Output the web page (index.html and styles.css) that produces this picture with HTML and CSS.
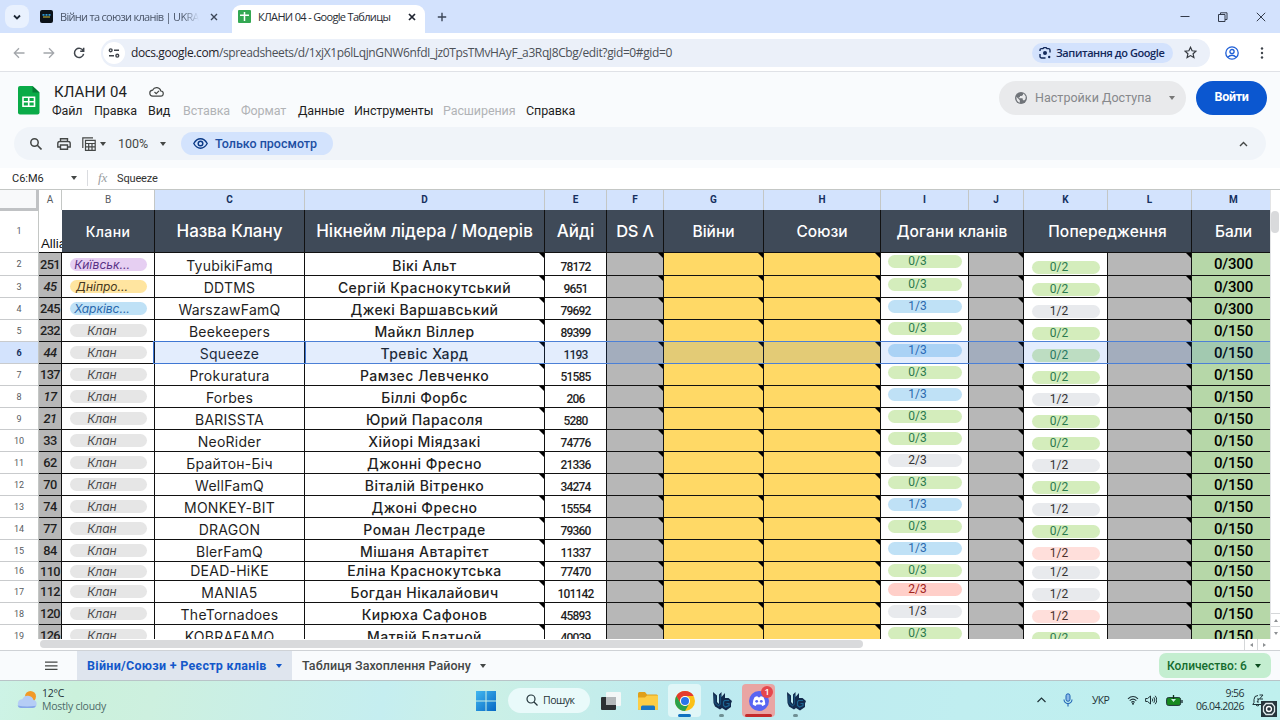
FILE: index.html
```
<!DOCTYPE html>
<html lang="uk">
<head>
    <meta charset="UTF-8">
    <meta name="viewport" content="width=device-width, initial-scale=1.0">
    <title>КЛАНИ 04 - Google Таблицы</title>
    <link rel="stylesheet" href="styles.css">
</head>
<body>
    <div class="tabstrip">
        <div class="tab-search">
            <svg width="10" height="10" viewBox="0 0 10 10"><path d="M2 3.5l3 3 3-3" fill="none" stroke="#1f2937" stroke-width="1.8"/></svg>
        </div>
        <div class="tab">
            <svg width="13" height="13" viewBox="0 0 13 13"><rect width="13" height="13" rx="2" fill="#0b1118"/><path d="M2.5 4.8h2M5.5 4.8h2M8.5 4.8h2" stroke="#2f9bd6" stroke-width="1.8"/><path d="M3 7h7" stroke="#b3a53a" stroke-width="1.2"/></svg>
            <span class="tab-title faded">Війни та союзи кланів | UKRAI</span>
            <svg width="8" height="8" viewBox="0 0 8 8"><path d="M1 1l6 6M7 1L1 7" stroke="#3c4657" stroke-width="1.4"/></svg>
        </div>
        <div class="tab active">
            <svg width="13" height="13" viewBox="0 0 13 13"><rect width="13" height="13" rx="1" fill="#34a853"/><path d="M6.5 2v9M2 5.2h9" stroke="#fff" stroke-width="1.5"/></svg>
            <span class="tab-title">КЛАНИ 04 - Google Таблицы</span>
            <svg width="8" height="8" viewBox="0 0 8 8"><path d="M1 1l6 6M7 1L1 7" stroke="#1f2430" stroke-width="1.7"/></svg>
        </div>
        <svg class="new-tab" width="10" height="10" viewBox="0 0 10 10"><path d="M5 .8v8.4M.8 5h8.4" stroke="#3c4657" stroke-width="1.4"/></svg>
        <div class="window-buttons">
            <svg width="10" height="10" viewBox="0 0 10 10"><path d="M.5 4.5h9" stroke="#333b4a"/></svg>
            <svg width="10" height="10" viewBox="0 0 10 10"><path d="M.5 2.500h6.500v7H.5zM2.500 2.500V.8H9V7.500H7" fill="none" stroke="#333b4a"/></svg>
            <svg width="10" height="10" viewBox="0 0 10 10"><path d="M.8.8l8.400 8.400M9.200.8L.8 9.200" stroke="#333b4a"/></svg>
        </div>
    </div>

    <div class="navbar">
        <svg class="nav-ico" width="12" height="12" viewBox="0 0 12 12"><path d="M11.500 6H1.500M6 1.300L1.300 6 6 10.700" fill="none" stroke="#a3a6ab" stroke-width="1.3"/></svg>
        <svg class="nav-ico" width="12" height="12" viewBox="0 0 12 12"><path d="M.5 6h10M6 1.300L10.700 6 6 10.700" fill="none" stroke="#a3a6ab" stroke-width="1.3"/></svg>
        <svg class="nav-ico" width="12" height="12" viewBox="0 0 12 12"><path d="M10.300 4A4.600 4.600 0 1 0 10.600 6.800M10.700 .8V4.300H7.200" fill="none" stroke="#3f444b" stroke-width="1.5"/></svg>
        <div class="omnibox">
            <div class="site-info">
                <svg width="12" height="10" viewBox="0 0 12 10"><g fill="none" stroke="#3f444b" stroke-width="1.400"><circle cx="2.700" cy="2.300" r="1.400"/><path d="M6 2.300h5M1 7.700h5"/><circle cx="9.300" cy="7.700" r="1.400"/></g></svg>
            </div>
            <span class="url"><b>docs.google.com</b>/spreadsheets/d/1xjX1p6lLqjnGNW6nfdI_jz0TpsTMvHAyF_a3RqJ8Cbg/edit?gid=0#gid=0</span>
            <div class="ask-google">
                <svg width="12" height="12" viewBox="0 0 12 12"><path d="M1 4V3q0-1.400 1.400-1.400H4L5 .6h2l1 1h1.600Q11 1.600 11 3v2.500M1 7v2.600Q1 11 2.400 11H6.500" fill="none" stroke="#12285a" stroke-width="1.400"/><circle cx="6" cy="6" r="2" fill="#12285a"/><circle cx="10.200" cy="10" r="1.200" fill="#12285a"/></svg>
                <span>Запитання до Google</span>
            </div>
            <svg class="star" width="13" height="13" viewBox="0 0 13 13"><path d="M6.500 1.300l1.600 3.500 3.800.4-2.800 2.600.8 3.700-3.400-1.900-3.400 1.900.8-3.700L1.100 5.200l3.800-.4z" fill="none" stroke="#33383f" stroke-width="1.200"/></svg>
        </div>
        <svg class="profile" width="14" height="14" viewBox="0 0 14 14"><g fill="none" stroke="#1f5fd6" stroke-width="1.300"><circle cx="7" cy="7" r="6.200"/><circle cx="7" cy="5.600" r="2.100"/><path d="M2.800 11.200Q7 7.200 11.200 11.200"/></g></svg>
        <svg class="kebab" width="4" height="12" viewBox="0 0 4 12"><g fill="#3f444b"><circle cx="2" cy="1.500" r="1.200"/><circle cx="2" cy="6" r="1.200"/><circle cx="2" cy="10.500" r="1.200"/></g></svg>
    </div>

    <div class="doc-header">
        <svg class="sheets-logo" width="22" height="29" viewBox="0 0 22 29"><path d="M2 0h12.500L21.500 6.500V26.500a2 2 0 0 1-2 2H2a2 2 0 0 1-2-2V2a2 2 0 0 1 2-2z" fill="#0aab48"/><path d="M14.500 0L21.500 6.500H14.500z" fill="#067a35"/><path d="M5 11.300h11.500v9H5zM5 15.800h11.500M10.700 11.300v9" fill="none" stroke="#fff" stroke-width="1.600"/></svg>
        <div class="doc-info">
            <div class="doc-title">
                <span>КЛАНИ 04</span>
                <svg width="15" height="11" viewBox="0 0 15 11"><path d="M4 10.200h7.500a2.600 2.600 0 0 0 .3-5.200A4.300 4.300 0 0 0 3.700 4.100 3 3 0 0 0 4 10.200zM5.500 6l1.700 1.700L10 4.800" fill="none" stroke="#444746" stroke-width="1.200"/></svg>
            </div>
            <div class="menu">
                <span class="m1">Файл</span><span class="m2">Правка</span><span class="m3">Вид</span><span class="m4 off">Вставка</span><span class="m5 off">Формат</span><span class="m6">Данные</span><span class="m7">Инструменты</span><span class="m8 off">Расширения</span><span class="m9">Справка</span>
            </div>
        </div>
        <div class="share">
            <svg width="12" height="12" viewBox="0 0 12 12"><circle cx="6" cy="6" r="6" fill="#707479"/><path d="M1.300 4.800L4.800 8.200V10.800Q1.300 9.800 1.300 4.800zM5 1.500H8V3L6.500 4H5V5.300H3.800V6.300H7.500L8 8.200H9.500Q11 7 10.700 4.500 9.500 2 8 1.500" fill="#e9eaec"/></svg>
            <span>Настройки Доступа</span>
            <i class="arrow"></i>
        </div>
        <div class="login">Войти</div>
    </div>

    <div class="toolbar-wrap">
        <div class="toolbar">
            <svg class="t-search" width="12" height="12" viewBox="0 0 12 12"><circle cx="4.500" cy="4.500" r="3.700" fill="none" stroke="#444746" stroke-width="1.500"/><path d="M7.300 7.300l4.200 4.200" stroke="#444746" stroke-width="1.600"/></svg>
            <svg class="t-print" width="14" height="12" viewBox="0 0 14 12"><path d="M3.500 3.500V.8h7v2.700M3.500 9H.8V5.500q0-2 2-2h8.400q2 0 2 2V9H10.500M3.500 7h7v4.300h-7z" fill="none" stroke="#444746" stroke-width="1.400"/></svg>
            <svg class="t-filter" width="14" height="14" viewBox="0 0 14 14"><path d="M.8 11V.8H11M3.500 3.300h9.700v10H3.500zM3.500 6.500h9.700M3.500 9.800h9.700M6.700 6.500v6.800M10 6.500v6.800" fill="none" stroke="#444746" stroke-width="1.200"/></svg>
            <i class="arrow"></i>
            <span class="zoom">100%</span>
            <i class="arrow"></i>
            <div class="view-only">
                <svg width="15" height="11" viewBox="0 0 15 11"><path d="M.8 5.500Q3.500.8 7.500.8t6.700 4.700Q11.500 10.200 7.500 10.200T.8 5.500z" fill="none" stroke="#0b3a86" stroke-width="1.400"/><circle cx="7.500" cy="5.500" r="2.300" fill="none" stroke="#0b3a86" stroke-width="1.500"/></svg>
                <span>Только просмотр</span>
            </div>
            <svg class="t-collapse" width="9" height="6" viewBox="0 0 9 6"><path d="M1 5l3.500-3.500L8 5" fill="none" stroke="#444746" stroke-width="1.400"/></svg>
        </div>
    </div>

    <div class="formula">
        <span class="range">C6:M6</span>
        <i class="arrow"></i>
        <span class="fx">fx</span>
        <span class="value">Squeeze</span>
    </div>

    <div class="sheet">
        <div class="grid" id="grid"></div>
        <div class="vscroll">
            <div class="vthumb"></div>
            <div class="step"><i class="up"></i></div>
            <div class="step"><i class="down"></i></div>
        </div>
    </div>
    <div class="hscroll">
        <div class="hthumb"></div>
        <div class="hstep"><i class="left"></i></div>
        <div class="hstep"><i class="right"></i></div>
    </div>

    <div class="sheet-tabs">
        <svg class="all-sheets" width="13" height="10" viewBox="0 0 13 10"><path d="M0 1.200h12.500M0 4.800h12.500M0 8.400h12.500" stroke="#444746" stroke-width="1.300"/></svg>
        <div class="sheet-tab current"><span>Війни/Союзи + Реєстр кланів</span><i class="arrow"></i></div>
        <div class="sheet-tab"><span>Таблиця Захоплення Району</span><i class="arrow"></i></div>
        <div class="count"><span>Количество: 6</span><i class="arrow"></i></div>
    </div>

    <div class="taskbar">
        <svg class="weather-ico" width="22" height="19" viewBox="0 0 22 19"><circle cx="14.500" cy="6.500" r="5.500" fill="#f29a26"/><path d="M5 18h11.500a4 4 0 0 0 1-7.900A6 6 0 0 0 6.300 9.200 4.500 4.500 0 0 0 5 18z" fill="#b5cdf6"/><path d="M5 18h11.500a4 4 0 0 0 3.500-2.200Q10 17.500 1.500 15.500 2.500 18 5 18z" fill="#86a8ea"/></svg>
        <div class="weather"><span>12°C</span><span class="dim">Mostly cloudy</span></div>
        <div class="apps">
            <svg class="win" width="20" height="20" viewBox="0 0 20 20"><defs><linearGradient id="w" x1="0" y1="0" x2="1" y2="1"><stop offset="0" stop-color="#42b7f0"/><stop offset="1" stop-color="#0668c4"/></linearGradient></defs><path d="M0 0h9.500v9.500H0zM10.500 0H20v9.500h-9.500zM0 10.500h9.500V20H0zM10.500 10.500H20V20h-9.500z" fill="url(#w)"/></svg>
            <div class="search">
                <svg width="12" height="12" viewBox="0 0 12 12"><circle cx="5" cy="5" r="4" fill="none" stroke="#23343a" stroke-width="1.200"/><path d="M8 8l3.500 3.500" stroke="#23343a" stroke-width="1.300"/></svg>
                <span>Пошук</span>
            </div>
            <div class="app"><svg width="20" height="20" viewBox="0 0 20 20"><rect x="5" y="1" width="15" height="14" rx="1" fill="#f3f7f7"/><rect x="0" y="6" width="15" height="13" rx="1" fill="#2d3033"/><rect x="5" y="6" width="10" height="8" fill="#b4b8ba"/></svg></div>
            <div class="app"><svg width="20" height="20" viewBox="0 0 20 20"><path d="M0 2.500Q0 1 1.500 1H7l2 2.500h9.500Q20 3.500 20 5v12.500Q20 19 18.500 19h-17Q0 19 0 17.500z" fill="#e0a01a"/><path d="M0 6.500h7L9 4.500h11v13q0 1.500-1.500 1.500h-17Q0 19 0 17.500z" fill="#fccd45"/><path d="M3 19v-3q0-1.500 1.500-1.500h11q1.500 0 1.500 1.500v3z" fill="#1a76c4"/></svg></div>
            <div class="app open">
                <svg width="20" height="20" viewBox="0 0 20 20"><circle cx="10" cy="10" r="10" fill="#fbc116"/><path d="M1.340 5A10 10 0 0 1 18.660 5H10a5 5 0 0 0-4.330 7.500z" fill="#e33b2e"/><path d="M1.340 5A10 10 0 0 0 10 20l4.330-7.500a5 5 0 0 1-8.660 0z" fill="#2aa14b"/><circle cx="10" cy="10" r="5" fill="#fff"/><circle cx="10" cy="10" r="4" fill="#2a74e8"/></svg>
                <i class="mark"></i>
            </div>
            <div class="app">
                <svg width="20" height="20" viewBox="0 0 20 20"><use href="#ug"/></svg>
                <i class="mark small"></i>
            </div>
            <div class="app alert">
                <svg width="20" height="20" viewBox="0 0 20 20"><circle cx="10" cy="10" r="10" fill="#5865f2"/><path d="M5.500 6.200Q7.500 5 8.500 5.300L9 6.200h2l.5-.9q1 -.3 3 .9 2 3.500 1.700 7.300-1.600 1.300-3 1.400l-.8-1.400H7.600l-.8 1.400q-1.400-.1-3-1.400Q3.500 9.700 5.500 6.200z" fill="#fff"/><circle cx="7.700" cy="10.300" r="1.400" fill="#5865f2"/><circle cx="12.300" cy="10.300" r="1.400" fill="#5865f2"/></svg>
                <i class="mark red"></i>
                <b class="badge">1</b>
            </div>
            <div class="app">
                <svg width="20" height="20" viewBox="0 0 20 20"><g id="ug"><path d="M1 1l4 3.500V11l2 2V3.500L9.500 1v5L13 2v5h3.500l3.500 3-1 2.500v3.500L14 19.500 10 17l-2 1.500L3 15.500 1.500 12z" fill="#122a4c"/><path d="M3 4.500V12l3.500 3L8.500 13V4" fill="none" stroke="#184f78" stroke-width="1.200"/><path d="M17 9.500h-4.500l-1 1.500v3.500l2 1.500 3.500-1.500V12.500h-2.500" fill="none" stroke="#1c6592" stroke-width="1.200"/></g></svg>
                <i class="mark small"></i>
            </div>
        </div>
        <div class="tray">
            <svg class="y1" width="9" height="6" viewBox="0 0 9 6"><path d="M.5 5l4-4 4 4" fill="none" stroke="#1f3338" stroke-width="1.200"/></svg>
            <svg class="y2" width="10" height="14" viewBox="0 0 10 14"><rect x="3" y=".8" width="4" height="7.500" rx="2" fill="#8bb9e8" stroke="#1d62b4"/><path d="M1 6.500a4 4 0 0 0 8 0M5 10.500v3" fill="none" stroke="#1d62b4" stroke-width="1.100"/></svg>
            <span class="lang">УКР</span>
            <svg class="y3" width="12" height="10" viewBox="0 0 12 10"><g fill="none" stroke="#1f3338" stroke-width="1.100"><path d="M1 3.800q5-4.600 10 0M2.700 5.700q3.300-3 6.600 0M4.300 7.400q1.700-1.500 3.400 0"/></g><circle cx="6" cy="8.700" r="1" fill="#1f3338"/></svg>
            <svg class="y4" width="12" height="10" viewBox="0 0 12 10"><path d="M.6 3.500h2L5.500 1v8L2.600 6.500h-2zM7.200 3.500q1.200 1.500 0 3M8.800 2.200q2.200 2.800 0 5.600M10.200.8q3.200 4.200 0 8.400" fill="none" stroke="#1f3338"/></svg>
            <svg class="y5" width="17" height="11" viewBox="0 0 17 11"><rect x=".6" y="2.600" width="14" height="7.800" rx="1.800" fill="#168a1e" stroke="#1f3338"/><path d="M16 5v3" stroke="#1f3338" stroke-width="1.400"/><path d="M7.500 0v5" stroke="#10331a" stroke-width="1.300"/><path d="M5 4h5L7.500 7z" fill="#c9efe0"/></svg>
            <div class="clock"><span>9:56</span><span>06.04.2026</span></div>
            <div class="bell">
                <svg width="12" height="13" viewBox="0 0 12 13"><path d="M6 1.500Q2 1.500 2 5.500V8.500L.8 10.500h10L9.800 8.500M4 11q1 1.500 3 .5M7.500 1h3.500L7.500 5H11M5 5h2L5 8h2" fill="none" stroke="#1f3338"/></svg>
                <div class="recorder"><svg width="16" height="16" viewBox="0 0 16 16"><rect width="16" height="16" fill="#25353b"/><path d="M5 2.500h6l2.500 3v5l-2.500 3H5l-2.500-3v-5z" fill="none" stroke="#dfe9ea" stroke-width="1.300"/><circle cx="8" cy="8" r="2.500" fill="none" stroke="#fff" stroke-width="1.400"/></svg></div>
            </div>
        </div>
    </div>

    <script>
        const letters = ["A", "B", "C", "D", "E", "F", "G", "H", "I", "J", "K", "L", "M"];
        const noted = ["D", "F", "G", "H", "J", "L"];

        // id, italic id, chip, clan, leader, player id, reprimand, colour, warning, colour, points
        const rows = [
            ["251", 0, "Київськ...", "TyubikiFamq", "Вікі Альт", "78172", "0/3", "green", "0/2", "green", "0/300", "purple"],
            ["45", 1, "Дніпро...", "DDTMS", "Сергій Краснокутський", "9651", "0/3", "green", "0/2", "green", "0/300", "yellow"],
            ["245", 0, "Харківс...", "WarszawFamQ", "Джекі Варшавський", "79692", "1/3", "blue", "1/2", "grey", "0/300", "blue"],
            ["232", 0, "Клан", "Beekeepers", "Майкл Віллер", "89399", "0/3", "green", "0/2", "green", "0/150"],
            ["44", 1, "Клан", "Squeeze", "Тревіс Хард", "1193", "1/3", "blue", "0/2", "green", "0/150"],
            ["137", 0, "Клан", "Prokuratura", "Рамзес Левченко", "51585", "0/3", "green", "0/2", "green", "0/150"],
            ["17", 1, "Клан", "Forbes", "Біллі Форбс", "206", "1/3", "blue", "1/2", "grey", "0/150"],
            ["21", 1, "Клан", "BARISSTA", "Юрий Парасоля", "5280", "0/3", "green", "0/2", "green", "0/150"],
            ["33", 0, "Клан", "NeoRider", "Хійорі Міядзакі", "74776", "0/3", "green", "0/2", "green", "0/150"],
            ["62", 0, "Клан", "Брайтон-Біч", "Джонні Фресно", "21336", "2/3", "grey", "1/2", "grey", "0/150"],
            ["70", 0, "Клан", "WellFamQ", "Віталій Вітренко", "34274", "0/3", "green", "0/2", "green", "0/150"],
            ["74", 0, "Клан", "MONKEY-BIT", "Джоні Фресно", "15554", "1/3", "blue", "1/2", "grey", "0/150"],
            ["77", 0, "Клан", "DRAGON", "Роман Лестраде", "79360", "0/3", "green", "0/2", "green", "0/150"],
            ["84", 0, "Клан", "BlerFamQ", "Мішаня Автарітєт", "11337", "1/3", "blue", "1/2", "pink", "0/150"],
            ["110", 0, "Клан", "DEAD-HiKE", "Еліна Краснокутська", "77470", "0/3", "green", "1/2", "grey", "0/150"],
            ["112", 0, "Клан", "MANIA5", "Богдан Нікалайович", "101142", "2/3", "red", "1/2", "grey", "0/150"],
            ["120", 0, "Клан", "TheTornadoes", "Кирюха Сафонов", "45893", "1/3", "grey", "1/2", "pink", "0/150"],
            ["126", 0, "Клан", "KOBRAFAMQ", "Матвій Блатной", "40039", "0/3", "green", "0/2", "green", "0/150"]
        ];

        const chip = (text, color) => `<span class="chip ${color}"><span>${text}</span></span>`;

        let html = `<div class="row letters"><div class="num corner"></div>` +
            letters.map(l => `<div class="letter ${l > "B" ? "picked" : ""}">${l}</div>`).join("") + `</div>`;

        html += `<div class="row head"><div class="num">1</div><div class="cell alli">Allia</div>
            <div class="cell h14">Клани</div><div class="cell h17">Назва Клану</div>
            <div class="cell h17">Нікнейм лідера / Модерів</div><div class="cell h17">Айді</div>
            <div class="cell h17 ds">DS Λ</div><div class="cell">Війни</div><div class="cell">Союзи</div>
            <div class="cell wide">Догани кланів</div><div class="cell wide">Попередження</div><div class="cell">Бали</div></div>`;

        rows.forEach((r, i) => {
            const n = i + 2;
            const content = {
                A: r[0], B: chip(r[2], r[11] || "plain"), C: r[3], D: r[4], E: r[5],
                I: chip(r[6], r[7]), K: chip(r[8], r[9]), M: r[10]
            };
            html += `<div class="row r${n} ${n === 6 ? "selected" : ""}"><div class="num">${n}</div>` +
                letters.map(l => `<div class="cell c${l} ${noted.includes(l) ? "note" : ""} ${l === "A" && r[1] ? "it" : ""}">${content[l] || ""}</div>`).join("") +
                `</div>`;
        });

        document.getElementById("grid").innerHTML = html;
    </script>
</body>
</html>
```
FILE: styles.css
```
* {
    box-sizing: border-box;
}
body {
    margin: 0;
    width: 1280px;
    height: 720px;
    overflow: hidden;
    display: flex;
    flex-direction: column;
    background-color: #fff;
    font-family: Roboto, "Liberation Sans", sans-serif;
    color: #1f1f1f;
}
svg {
    display: block;
    flex: none;
}
span {
    white-space: nowrap;
}
.arrow {
    flex: none;
    border-left: 3.5px solid transparent;
    border-right: 3.5px solid transparent;
    border-top: 4px solid #444746;
}

/* browser */
.tabstrip {
    height: 33px;
    flex: none;
    display: flex;
    align-items: center;
    background-color: #d3e2fd;
    font-family: "Open Sans", sans-serif;
    font-size: 11px;
}
.tab-search {
    width: 24px;
    height: 23px;
    margin-left: 5px;
    border-radius: 8px;
    background-color: #e9f1fe;
    display: flex;
    align-items: center;
    justify-content: center;
}
.tab {
    width: 190px;
    margin-left: 11px;
    display: flex;
    align-items: center;
    color: #4a5568;
}
.tab-title {
    flex: none;
    width: 139px;
    margin: 0 11px 0 7px;
    letter-spacing: -0.7px;
}
.faded {
    -webkit-mask-image: linear-gradient(to right, #000 88%, transparent);
    mask-image: linear-gradient(to right, #000 88%, transparent);
}
.tab.active {
    width: 193px;
    height: 28px;
    margin: 5px 0 0 2px;
    padding: 0 0 5px 6px;
    border-radius: 9px 9px 0 0;
    background-color: #fff;
    color: #272b33;
}
.tab.active .tab-title {
    letter-spacing: -0.67px;
    margin-right: 12px;
    width: 138px;
}
.new-tab {
    margin-left: 12px;
}
.window-buttons {
    margin-left: auto;
    margin-right: 14px;
    display: flex;
    gap: 28px;
}
.navbar {
    height: 39px;
    flex: none;
    display: flex;
    align-items: center;
    border-bottom: 1px solid #e0e2e7;
    padding: 1px 0 0 13px;
    font-family: "Open Sans", sans-serif;
}
.nav-ico {
    margin-right: 18px;
}
.omnibox {
    width: 1109px;
    height: 28px;
    margin-left: -2px;
    border-radius: 14px;
    background-color: #ebf0f9;
    display: flex;
    align-items: center;
    padding-left: 2px;
}
.site-info {
    width: 22px;
    height: 22px;
    border-radius: 50%;
    background-color: #fff;
    display: flex;
    align-items: center;
    justify-content: center;
}
.url {
    margin-left: 6px;
    font-size: 12px;
    letter-spacing: -0.38px;
    color: #4c5057;
}
.url b {
    font-weight: 400;
    color: #1f2329;
}
.ask-google {
    width: 141px;
    height: 20px;
    margin-left: auto;
    border-radius: 10px;
    background-color: #d3e2fd;
    display: flex;
    align-items: center;
    gap: 5px;
    padding-left: 7px;
    font-size: 11px;
    font-weight: 600;
    letter-spacing: -0.42px;
    color: #12285a;
}
.star {
    margin: 0 13px 0 11px;
}
.profile {
    margin-left: 15px;
}
.kebab {
    margin-left: 21px;
}

/* document header */
.doc-header {
    height: 54px;
    flex: none;
    display: flex;
    background-color: #f9fbfd;
    padding: 0 14px 0 18px;
}
.sheets-logo {
    margin-top: 14px;
}
.doc-info {
    margin: 10px 0 0 12px;
}
.doc-title {
    display: flex;
    align-items: center;
    gap: 22px;
    height: 19px;
    margin-left: 2px;
    font-size: 15px;
    letter-spacing: 0.1px;
}
.menu {
    display: flex;
    height: 19px;
    align-items: center;
    font-size: 12.5px;
    letter-spacing: -0.1px;
}
.menu span {
    flex: none;
}
.m1 { width: 42px; }
.m2 { width: 54px; }
.m3 { width: 35px; }
.m4 { width: 58px; }
.m5 { width: 57px; }
.m6 { width: 56px; }
.m7 { width: 89px; }
.m8 { width: 83px; }
.menu .off {
    color: #b1b3b6;
}
.share {
    width: 187px;
    height: 34px;
    margin: 9px 10px 0 auto;
    border-radius: 17px;
    background-color: #e9eaec;
    display: flex;
    align-items: center;
    padding: 0 11px 1px 16px;
    gap: 8px;
    font-size: 12.5px;
    letter-spacing: 0.03px;
    color: #86888b;
}
.share .arrow {
    margin-left: auto;
    border-top-color: #777;
}
.login {
    width: 71px;
    height: 34px;
    margin-top: 9px;
    margin-right: -1px;
    border-radius: 17px;
    background-color: #0b57d0;
    color: #fff;
    font-size: 12.5px;
    font-weight: 700;
    letter-spacing: -0.3px;
    text-align: center;
    line-height: 32px;
}
.toolbar-wrap {
    height: 42px;
    flex: none;
    background-color: #f9fbfd;
    padding: 1px 14px 0;
}
.toolbar {
    height: 33px;
    border-radius: 17px;
    background-color: #f0f4f9;
    display: flex;
    align-items: center;
    padding: 0 18px 0 16px;
}
.t-print {
    margin-left: 15px;
}
.t-filter {
    margin: 0 4px 0 11px;
}
.zoom {
    width: 32px;
    margin: 0 10px 0 12px;
    font-size: 12.5px;
    color: #444746;
}
.view-only {
    width: 152px;
    height: 23px;
    margin-left: 15px;
    border-radius: 12px;
    background-color: #d3e3fd;
    display: flex;
    align-items: center;
    padding-left: 12px;
    gap: 7px;
    color: #1d4fa3;
    font-size: 12.5px;
    font-weight: 500;
}
.t-collapse {
    margin-left: auto;
}
.formula {
    height: 21px;
    flex: none;
    display: flex;
    align-items: center;
    padding: 0 0 1px 12px;
    font-size: 11px;
}
.range {
    width: 59px;
}
.fx {
    margin-left: 10px;
    padding-left: 10px;
    width: 30px;
    border-left: 1px solid #dadce0;
    font-family: "Liberation Serif", serif;
    font-style: italic;
    font-size: 13px;
    color: #9a9da1;
}
.value {
    color: #333;
    letter-spacing: -0.15px;
}

/* grid */
.sheet {
    height: 450px;
    flex: none;
    display: flex;
    border-top: 1px solid #c4c7c5;
}
.grid {
    width: 1270px;
    flex: none;
    overflow: hidden;
}
.row {
    display: grid;
    grid-template-columns: 39px 23px 93px 150px 240px 62px 57px 100px 117px 88px 55px 84px 84px 84px;
    height: 22px;
    position: relative;
}
.letters {
    height: 20px;
}
.head {
    height: 43px;
}
.r2 {
    height: 23px;
}
.r16 {
    height: 19px;
}
.num {
    border-right: 1px solid #c4c7c5;
    border-bottom: 1px solid #c9cbcd;
    font-size: 9px;
    color: #575b5f;
    display: flex;
    align-items: center;
    justify-content: center;
}
.corner {
    border-right: 3px solid #c0c2c4;
    border-bottom: 3px solid #c0c2c4;
    background-color: #f8f9fa;
}
.letter {
    border-right: 1px solid #c4c7c5;
    border-bottom: 1px solid #c4c7c5;
    font-size: 10px;
    color: #575b5f;
    text-align: center;
    line-height: 20px;
}
.picked {
    background-color: #d3e3fd;
    color: #16305f;
    font-weight: 700;
}
.cell {
    min-width: 0;
    overflow: hidden;
    white-space: nowrap;
    border-right: 1px solid #111;
    border-bottom: 1px solid #111;
    display: flex;
    align-items: center;
    justify-content: center;
    position: relative;
    font-family: Inter, sans-serif;
}
.head .cell {
    background-color: #3f4a58;
    color: #fff;
    font-size: 15.5px;
    font-weight: 500;
}
.head .h14 {
    font-size: 14px;
    letter-spacing: 0.4px;
}
.head .h17 {
    font-size: 17px;
}
.head .ds {
    font-size: 16.5px;
    letter-spacing: -0.3px;
}
.head .wide {
    grid-column: span 2;
    letter-spacing: 0.15px;
}
.head .alli {
    background-color: #fff;
    color: #111;
    justify-content: flex-start;
    align-items: flex-end;
    padding: 0 0 1px 2px;
    border-right: 0;
    font-family: "Liberation Sans", sans-serif;
    font-size: 13.3px;
    font-weight: 400;
}
.cA {
    background-color: #b7b7b7;
    font-family: Roboto, sans-serif;
    font-size: 12.8px;
    font-weight: 500;
    letter-spacing: -0.6px;
}
.it {
    font-style: italic;
}
.cC, .cD {
    align-items: flex-end;
    line-height: 19px;
    font-size: 14px;
    letter-spacing: 0.25px;
}
.cD {
    font-weight: 500;
    letter-spacing: 0.45px;
}
.r16 .cC, .r16 .cD {
    line-height: 18px;
}
.cE {
    align-items: flex-end;
    line-height: 15px;
    font-family: Roboto, sans-serif;
    font-size: 12px;
    font-weight: 500;
    letter-spacing: -0.85px;
}
.cF, .cJ, .cL {
    background-color: #b7b7b7;
}
.cG, .cH {
    background-color: #ffd966;
}
.cM {
    background-color: #b6d7a8;
    color: #000;
    font-family: Roboto, sans-serif;
    font-size: 15px;
    font-weight: 500;
    letter-spacing: -0.2px;
}
.note::after {
    content: "";
    position: absolute;
    top: 0;
    right: 0;
    border-top: 5px solid #000;
    border-left: 5px solid transparent;
}
.chip {
    height: 13px;
    width: 77px;
    border-radius: 7px;
    display: flex;
    justify-content: center;
    line-height: 13px;
    font-size: 12px;
}
.cB .chip {
    font-style: italic;
    padding-right: 12px;
}
.cI {
    align-items: flex-start;
    padding-top: 2px;
}
.cI .chip {
    width: 74px;
    padding-right: 14px;
}
.cK {
    align-items: flex-end;
    padding-bottom: 1px;
}
.cK .chip {
    width: 68px;
    padding-right: 13px;
}
.cI .chip, .cK .chip {
    font-family: Roboto, sans-serif;
}
.plain {
    background-color: #e6e6e6;
    color: #4b4b4b;
}
.purple {
    background-color: #e6cff2;
    color: #5a3286;
}
.yellow {
    background-color: #ffe5a0;
    color: #473821;
}
.blue {
    background-color: #bfe1f6;
    color: #2b69ad;
}
.green {
    background-color: #d4edbc;
    color: #2b7a4f;
}
.grey {
    background-color: #e8eaed;
    color: #333;
}
.pink {
    background-color: #ffdfdb;
    color: #4a302c;
}
.red {
    background-color: #ffcfc9;
    color: #a0231c;
}
.selected .num {
    background-color: #d3e3fd;
    color: #16305f;
    font-weight: 700;
}
.selected::before {
    content: "";
    position: absolute;
    z-index: 2;
    left: 154px;
    right: 0;
    top: -1px;
    bottom: 0;
    background-color: rgba(26, 103, 240, 0.12);
    border-top: 1px solid #4c80d6;
    border-bottom: 1px solid #4c80d6;
}
.selected::after {
    content: "";
    position: absolute;
    z-index: 3;
    left: 153px;
    width: 151px;
    top: -1px;
    bottom: 0;
    border: 1px solid #3f77d3;
}

/* scrollbars */
.vscroll {
    width: 10px;
    display: flex;
    flex-direction: column;
    background-color: #fff;
    border-left: 1px solid #e3e4e6;
}
.vthumb {
    width: 8px;
    height: 22px;
    margin: 21px 0 auto;
    border-radius: 4px;
    background-color: #d9dadc;
}
.step {
    height: 13px;
    border-top: 1px solid #d5d7d9;
    display: flex;
    align-items: center;
    justify-content: center;
}
.up, .down, .left, .right {
    border: 2px solid transparent;
}
.up { border-bottom: 3px solid #8d9093; border-top: 0; }
.down { border-top: 3px solid #8d9093; border-bottom: 0; }
.left { border-right: 3px solid #8d9093; border-left: 0; }
.right { border-left: 3px solid #8d9093; border-right: 0; }
.hscroll {
    height: 11px;
    flex: none;
    display: flex;
    padding: 0 10px 0 39px;
}
.hthumb {
    width: 823px;
    height: 8px;
    margin: 1px auto 0 1px;
    border-radius: 4px;
    background-color: #d9dadc;
}
.hstep {
    width: 13px;
    border-left: 1px solid #d5d7d9;
    display: flex;
    align-items: center;
    justify-content: center;
}

/* sheet tabs */
.sheet-tabs {
    height: 31px;
    flex: none;
    display: flex;
    border-top: 1px solid #cfd2d6;
    border-bottom: 1px solid #b9c4c8;
    background-color: #f9fbfd;
    font-size: 12.5px;
    font-weight: 500;
}
.all-sheets {
    margin: 10px 19px 0 45px;
}
.sheet-tab {
    height: 29px;
    display: flex;
    align-items: center;
    gap: 9px;
    padding: 0 10px;
    color: #444746;
    letter-spacing: 0.06px;
}
.current {
    width: 215px;
    background-color: #dfe5ee;
    color: #1358ca;
    font-weight: 700;
    letter-spacing: 0.3px;
}
.current .arrow {
    border-top-color: #1358ca;
}
.count {
    width: 112px;
    height: 25px;
    margin: 2px 9px 0 auto;
    border-radius: 7px;
    background-color: #c4eed0;
    color: #146c2e;
    display: flex;
    align-items: center;
    padding-left: 8px;
    gap: 8px;
    font-size: 12px;
}
.count .arrow {
    border-top-color: #0b4a1e;
}

/* taskbar */
.taskbar {
    height: 39px;
    flex: none;
    display: flex;
    align-items: center;
    background: linear-gradient(100deg, #cdf3e6 0, #cbf1dc 6%, #cdf0df 12%, #c5eef0 30%, #cbf0e6 38%, #bdeaf0 55%, #c0eef0 75%, #bff0ee 100%);
    font-family: "Open Sans", sans-serif;
    font-size: 10.5px;
    color: #1f3338;
}
.weather-ico {
    margin: 0 4px 2px 16px;
}
.weather {
    width: 100px;
    margin-bottom: 2px;
    display: flex;
    flex-direction: column;
    line-height: 13px;
    letter-spacing: -0.25px;
}
.dim {
    color: #4d6a68;
}
.apps {
    display: flex;
    align-items: center;
    margin-left: 334px;
}
.search {
    width: 82px;
    height: 25px;
    margin: 0 12px 0 12px;
    border-radius: 13px;
    background-color: #e9fafa;
    display: flex;
    align-items: center;
    gap: 5px;
    padding: 0 0 1px 18px;
    letter-spacing: -0.5px;
}
.app {
    width: 33px;
    height: 33px;
    margin-right: 4px;
    border-radius: 4px;
    display: flex;
    align-items: center;
    justify-content: center;
    position: relative;
}
.search + .app {
    margin-left: -8px;
}
.open {
    background-color: #e0f6f7;
}
.alert {
    background-color: #e9a5a3;
}
.mark {
    position: absolute;
    bottom: 0;
    left: 10px;
    width: 13px;
    height: 3px;
    border-radius: 2px;
    background-color: #1171c0;
}
.small {
    left: 14px;
    width: 5px;
    background-color: #6f9094;
}
.red.mark {
    left: 3px;
    width: 27px;
    background-color: #c42b2b;
}
.badge {
    position: absolute;
    top: 2px;
    right: 2px;
    width: 12px;
    height: 12px;
    border-radius: 50%;
    background-color: #e5484d;
    color: #fff;
    font-size: 9px;
    font-weight: 600;
    line-height: 12px;
    text-align: center;
}
.tray {
    margin-left: auto;
    margin-bottom: 1px;
    display: flex;
    align-items: center;
}
.y2 { margin-left: 22px; }
.y1 { margin-right: -5px; }
.lang { width: 17px; margin: 0 18px 0 19px; letter-spacing: -0.7px; }
.y4 { margin-left: 6px; }
.y5 { margin-left: 9px; }
.clock {
    width: 61px;
    display: flex;
    flex-direction: column;
    align-items: flex-end;
    line-height: 13px;
    letter-spacing: -0.55px;
}
.bell {
    width: 36px;
    flex: none;
    padding-left: 8px;
    position: relative;
}
.recorder {
    position: absolute;
    left: 17px;
    top: 7px;
}
```
